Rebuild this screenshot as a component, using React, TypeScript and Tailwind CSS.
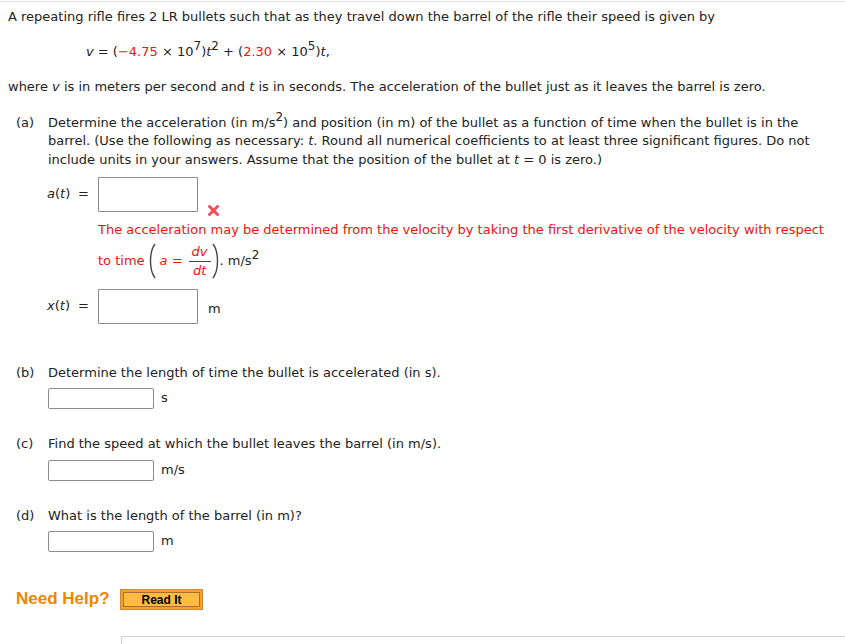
import type { ReactNode } from 'react';

const red = 'text-[#ee1111]';

function Sup({ children }: { children: ReactNode }) {
    return <sup className="text-[12px]">{children}</sup>;
}

function AnswerBox({ size = 'lg' }: { size?: 'lg' | 'sm' }) {
    return (
        <div
            className={
                size === 'lg'
                    ? 'h-[35px] w-[100px] shrink-0 rounded-[1px] border border-[#8c8c8c] bg-white'
                    : 'h-[21px] w-[106px] shrink-0 rounded-[2px] border border-[#8c8c8c] bg-white'
            }
        />
    );
}

function WrongMark() {
    return (
        <svg width="11" height="11" viewBox="0 0 11 11" className="block">
            <path d="M1.5 1.5 L9.5 9.5 M9.5 1.5 L1.5 9.5" stroke="#f0505a" strokeWidth="3" strokeLinecap="round" />
        </svg>
    );
}

function Paren({ flip = false }: { flip?: boolean }) {
    return (
        <svg width="9" height="36" viewBox="0 0 9 36" className="block">
            <path
                d={flip ? 'M2 1 C8 9 8 27 2 35' : 'M7 1 C1 9 1 27 7 35'}
                stroke="#444"
                strokeWidth="1.4"
                fill="none"
            />
        </svg>
    );
}

function Part({ label, children }: { label: string; children: ReactNode }) {
    return (
        <div className="flex pl-4 pr-[22px]">
            <div className="w-8 shrink-0">({label})</div>
            <div className="min-w-0 flex-1">{children}</div>
        </div>
    );
}

function SmallAnswer({ unit }: { unit: string }) {
    return (
        <div className="mt-[6px] flex items-center gap-[7px]">
            <AnswerBox size="sm" />
            <span>{unit}</span>
        </div>
    );
}

function FnLabel({ name }: { name: string }) {
    return (
        <div className="flex h-[35px] w-[51px] shrink-0 items-center">
            <span>
                <i>{name}</i>(<i>t</i>)
            </span>
            <span className="ml-auto mr-[9px]">=</span>
        </div>
    );
}

export default function App() {
    return (
        <div className="min-h-[644px] bg-white font-['DejaVu_Sans',Verdana,sans-serif] text-[13px] leading-[18.5px] text-[#222]">
            <div className="mt-px h-px bg-[#e3e3e3]" />

            <div className="pl-2 pt-[6px]">
                A repeating rifle fires 2 LR bullets such that as they travel down the barrel of the rifle their speed is given by
            </div>

            <div className="mt-[16px] pl-[86px]">
                <i>v</i> = (<span className={red}>−4.75</span> × 10<Sup>7</Sup>)<i>t</i>
                <Sup>2</Sup> + (<span className={red}>2.30</span> × 10<Sup>5</Sup>)<i>t</i>,
            </div>

            <div className="mt-[17px] pl-2">
                where <i>v</i> is in meters per second and <i>t</i> is in seconds. The acceleration of the bullet just as it leaves the barrel is zero.
            </div>

            <div className="mt-[17px]">
                <Part label="a">
                    Determine the acceleration (in m/s<Sup>2</Sup>) and position (in m) of the bullet as a function of time when the bullet is in the barrel. (Use the following as necessary: <i>t</i>. Round all numerical coefficients to at least three significant figures. Do not include units in your answers. Assume that the position of the bullet at <i>t</i> = 0 is zero.)
                </Part>

                <div className="mt-[8px] flex items-start pl-[47px]">
                    <FnLabel name="a" />
                    <div>
                        <div className="flex items-start">
                            <AnswerBox />
                            <div className="ml-[10px] mt-[28px]">
                                <WrongMark />
                            </div>
                        </div>
                        <div className={`mt-[5px] ${red}`}>
                            The acceleration may be determined from the velocity by taking the first derivative of the velocity with respect
                        </div>
                        <div className="mt-[3px] flex items-center">
                            <span className={red}>to time</span>
                            <span className="ml-[3px]">
                                <Paren />
                            </span>
                            <span className={`ml-[3px] ${red}`}>
                                <i>a</i> =
                            </span>
                            <span className="ml-[6px] inline-flex flex-col items-center leading-[18px]">
                                <span className={`px-[2px] ${red}`}>
                                    <i>dv</i>
                                </span>
                                <span className="h-px w-[22px] bg-[#444]" />
                                <span className={`px-[2px] ${red}`}>
                                    <i>dt</i>
                                </span>
                            </span>
                            <span>
                                <Paren flip />
                            </span>
                            <span>. m/s</span>
                            <span className="-mt-[12px] text-[12px]">2</span>
                        </div>
                    </div>
                </div>

                <div className="mt-[9px] flex items-center pl-[47px]">
                    <FnLabel name="x" />
                    <AnswerBox />
                    <span className="ml-[10px] mt-[6px]">m</span>
                </div>
            </div>

            <div className="mt-[40px]">
                <Part label="b">
                    Determine the length of time the bullet is accelerated (in s).
                    <SmallAnswer unit="s" />
                </Part>
            </div>

            <div className="mt-[26px]">
                <Part label="c">
                    Find the speed at which the bullet leaves the barrel (in m/s).
                    <SmallAnswer unit="m/s" />
                </Part>
            </div>

            <div className="mt-[26px]">
                <Part label="d">
                    What is the length of the barrel (in m)?
                    <SmallAnswer unit="m" />
                </Part>
            </div>

            <div className="mt-[37px] flex items-center pl-4">
                <span className="w-[104px] font-['Liberation_Sans',Arial,sans-serif] text-[17px] font-bold text-[#ef8600]">Need Help?</span>
                <button
                    type="button"
                    className="h-[21px] w-[83px] border border-[#c98a3e] bg-[#f5a030] p-[2px] font-['Liberation_Sans',Arial,sans-serif]"
                >
                    <span className="flex h-full w-full items-center justify-center border border-[#a86f2c] bg-[#ffbb42] text-[12px] font-bold leading-none text-black">
                        Read It
                    </span>
                </button>
            </div>

            <div className="ml-[121px] mt-[26px] h-3 border-l border-t border-[#cfcfcf]" />
        </div>
    );
}
